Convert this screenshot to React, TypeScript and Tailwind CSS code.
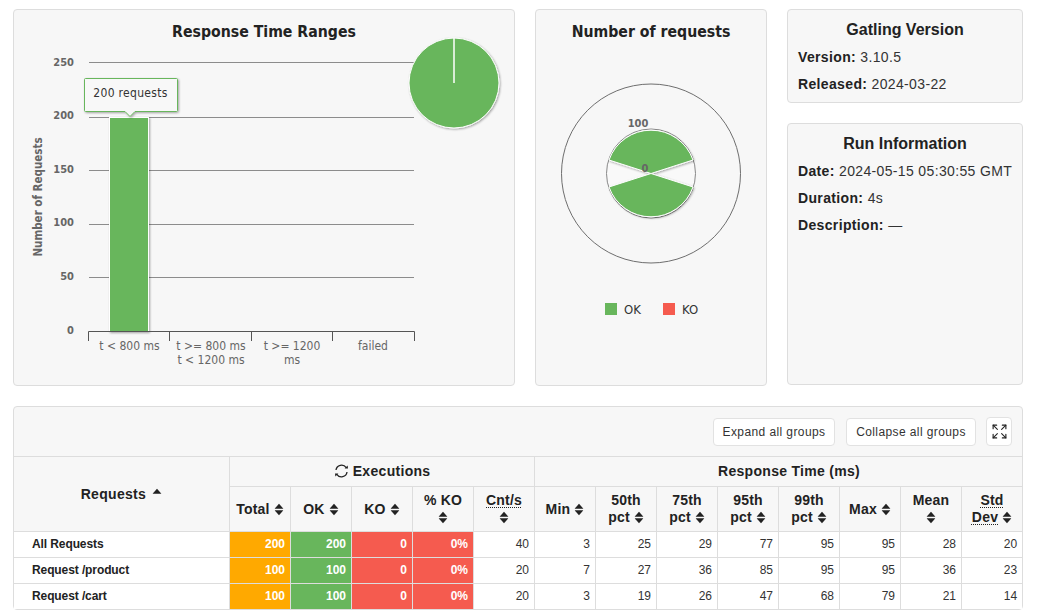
import { Expand } from 'lucide-react';

const GREEN = '#68b65c';
const RED = '#f55b4f';
const ORANGE = '#ffa900';

const chartFont = { fontFamily: '"DejaVu Sans Condensed", "DejaVu Sans", sans-serif', fontStretch: 'condensed' };

function SortIcon({ up = true, down = true }: { up?: boolean; down?: boolean }) {
  return (
    <svg width="10" height="13" viewBox="0 0 9 12" className="inline-block align-[-2px]" fill="#222">
      {up && <path d="M4.5 0.8 L8.4 5 Q8.5 5.4 8 5.4 L1 5.4 Q0.5 5.4 0.6 5 Z" />}
      {down && <path d="M1 6.6 L8 6.6 Q8.5 6.6 8.4 7 L4.5 11.2 L0.6 7 Q0.5 6.6 1 6.6 Z" />}
    </svg>
  );
}

function LoopIcon() {
  return (
    <svg width="15" height="14" viewBox="0 0 15 14" className="inline-block align-[-2px]" fill="none" stroke="#222" strokeWidth="1.3">
      <path d="M2 6 A5.6 5.6 0 0 1 12.2 3.6" />
      <path d="M13 8 A5.6 5.6 0 0 1 2.8 10.4" />
      <path d="M10.6 4.4 L14 4.6 L13.6 1.4 Z" fill="#222" stroke="none" />
      <path d="M4.4 9.6 L1 9.4 L1.4 12.6 Z" fill="#222" stroke="none" />
    </svg>
  );
}

function ResponseTimeChart() {
  const grid = [
    { y: 62, label: '250', base: 66 },
    { y: 117, label: '200', base: 119 },
    { y: 170, label: '150', base: 173 },
    { y: 224, label: '100', base: 226 },
    { y: 277, label: '50', base: 280 },
  ];
  return (
    <svg width="500" height="375" className="block" style={chartFont}>
      <defs>
        <filter id="soft" x="-20%" y="-20%" width="140%" height="140%">
          <feDropShadow dx="1" dy="1" stdDeviation="1" floodColor="#000" floodOpacity="0.35" />
        </filter>
      </defs>
      <g transform="translate(-14 -10)">
        <text x="264" y="36.5" textAnchor="middle" fontSize="15.7" fontWeight="700" fill="#222">Response Time Ranges</text>
        <text transform="translate(42 197) rotate(-90)" textAnchor="middle" fontSize="11.5" fontWeight="700" fill="#666">Number of Requests</text>
        {grid.map(g => (
          <g key={g.label}>
            <line x1="89" x2="414" y1={g.y + 0.5} y2={g.y + 0.5} stroke="#8c8c8c" />
            <text x="74" y={g.base} textAnchor="end" fontSize="11" fontWeight="700" fill="#666">{g.label}</text>
          </g>
        ))}
        <text x="74" y="334" textAnchor="end" fontSize="11" fontWeight="700" fill="#666">0</text>
        <rect x="109.5" y="117.5" width="39" height="214" fill={GREEN} stroke="#fff" filter="url(#soft)" />
        <path d="M88.5 341 V331.5 H414.5 V341 M169.5 331.5 V341 M251.5 331.5 V341 M332.5 331.5 V341" fill="none" stroke="#555" />
        <g fontSize="12" fill="#666" textAnchor="middle">
          <text x="129.5" y="350">t &lt; 800 ms</text>
          <text x="211" y="350">t &gt;= 800 ms</text>
          <text x="211" y="364">t &lt; 1200 ms</text>
          <text x="292" y="350">t &gt;= 1200</text>
          <text x="292" y="364">ms</text>
          <text x="373" y="350">failed</text>
        </g>
        <path d="M85.5 78.5 H176.5 Q177.5 78.5 177.5 79.5 V110.5 Q177.5 111.5 176.5 111.5 H135 L130 116.5 L125 111.5 H85.5 Q84.5 111.5 84.5 110.5 V79.5 Q84.5 78.5 85.5 78.5 Z" fill="#f8f8f8" stroke={GREEN} filter="url(#soft)" />
        <text x="130.5" y="97" textAnchor="middle" fontSize="12" fill="#333" letterSpacing="0.3">200 requests</text>
        <circle cx="454" cy="83" r="45" fill={GREEN} stroke="#fff" filter="url(#soft)" />
        <line x1="454" x2="454" y1="38" y2="83" stroke="#fff" strokeWidth="1.5" />
      </g>
    </svg>
  );
}

function RequestsChart() {
  return (
    <svg width="230" height="375" className="block" style={chartFont}>
      <g transform="translate(-536 -10)">
        <text x="651" y="36.5" textAnchor="middle" fontSize="15.7" fontWeight="700" fill="#222">Number of requests</text>
        <circle cx="651" cy="173.5" r="89.5" fill="none" stroke="#6e6e6e" />
        <circle cx="651" cy="173.5" r="44.5" fill="#f9f9f9" stroke="#888" />
        <path d="M651 173.5 L693 160 A44.5 44.5 0 0 0 609 160 Z" fill={GREEN} stroke="#fff" filter="url(#soft)" />
        <path d="M651 173.5 L693 187 A44.5 44.5 0 0 1 609 187 Z" fill={GREEN} stroke="#fff" filter="url(#soft)" />
        <text x="638" y="127" textAnchor="middle" fontSize="11" fontWeight="700" fill="#666">100</text>
        <text x="645" y="172" textAnchor="middle" fontSize="11" fontWeight="700" fill="#666">0</text>
        <rect x="605" y="303" width="12" height="12" fill={GREEN} />
        <text x="624" y="314" fontSize="13" fill="#333">OK</text>
        <rect x="663" y="303" width="12" height="12" fill={RED} />
        <text x="682" y="314" fontSize="13" fill="#333">KO</text>
      </g>
    </svg>
  );
}

function InfoLine({ label, value }: { label: string; value: string }) {
  return (
    <p className="text-[14px] leading-[27px] tracking-[0.35px] whitespace-nowrap text-[#333]">
      <span className="font-bold text-[#222]">{label}</span> {value}
    </p>
  );
}

const metricHeads: { top: string; bottom?: string; inline?: boolean; dotted?: boolean }[] = [
  { top: 'Total', inline: true },
  { top: 'OK', inline: true },
  { top: 'KO', inline: true },
  { top: '% KO' },
  { top: 'Cnt/s', dotted: true },
  { top: 'Min', inline: true },
  { top: '50th', bottom: 'pct' },
  { top: '75th', bottom: 'pct' },
  { top: '95th', bottom: 'pct' },
  { top: '99th', bottom: 'pct' },
  { top: 'Max', inline: true },
  { top: 'Mean' },
  { top: 'Std', bottom: 'Dev', dotted: true },
];

const rows = [
  { name: 'All Requests', total: 200, ok: 200, cnt: 40, times: [3, 25, 29, 77, 95, 95, 28, 20] },
  { name: 'Request /product', total: 100, ok: 100, cnt: 20, times: [7, 27, 36, 85, 95, 95, 36, 23] },
  { name: 'Request /cart', total: 100, ok: 100, cnt: 20, times: [3, 19, 26, 47, 68, 79, 21, 14] },
];

const dotted = 'underline decoration-dotted decoration-1 underline-offset-2';

function MetricHead({ head, last }: { head: (typeof metricHeads)[number]; last: boolean }) {
  const cls = head.dotted ? dotted : '';
  return (
    <th className={`border-b border-[#ddd] text-center align-middle font-bold text-[14px] leading-[17px] tracking-[0.2px] text-[#222] ${last ? '' : 'border-r'}`}>
      {head.inline ? (
        <span>{head.top} <SortIcon /></span>
      ) : head.bottom ? (
        <>
          <div className={cls}>{head.top}</div>
          <div><span className={cls}>{head.bottom}</span> <SortIcon /></div>
        </>
      ) : (
        <>
          <div className={cls}>{head.top}</div>
          <div><SortIcon /></div>
        </>
      )}
    </th>
  );
}

function ColorCell({ value, color, isLast }: { value: string | number; color: string; isLast: boolean }) {
  return (
    <td className={`border-r border-[#ddd] px-[5px] pb-px text-right font-bold text-white ${isLast ? '' : 'border-b'}`} style={{ backgroundColor: color }}>
      {value}
    </td>
  );
}

export default function App() {
  return (
    <div className="w-[1043px] h-[615px] overflow-hidden bg-white pt-[9px] pl-[13px]" style={{ fontFamily: '"Liberation Sans", Arial, sans-serif' }}>
      <div className="flex h-[377px] gap-5">
        <div className="w-[502px] rounded-sm border border-[#ddd] bg-[#f7f7f7]">
          <ResponseTimeChart />
        </div>
        <div className="w-[232px] rounded-sm border border-[#ddd] bg-[#f7f7f7]">
          <RequestsChart />
        </div>
        <div className="flex w-[236px] flex-col gap-5">
          <div className="h-[94px] rounded-sm border border-[#ddd] bg-[#f7f7f7] px-[10px] pt-[10px]">
            <h2 className="mb-[4px] text-center text-[16px] leading-[20px] font-bold text-[#222]">Gatling Version</h2>
            <InfoLine label="Version:" value="3.10.5" />
            <InfoLine label="Released:" value="2024-03-22" />
          </div>
          <div className="mb-px flex-1 rounded-sm border border-[#ddd] bg-[#f7f7f7] px-[10px] pt-[10px]">
            <h2 className="mb-[4px] text-center text-[16px] leading-[20px] font-bold text-[#222]">Run Information</h2>
            <InfoLine label="Date:" value="2024-05-15 05:30:55 GMT" />
            <InfoLine label="Duration:" value="4s" />
            <InfoLine label="Description:" value="—" />
          </div>
        </div>
      </div>

      <div className="mt-5 w-[1010px] rounded-sm border border-[#ddd] bg-[#f7f7f7]">
        <div className="flex h-[50px] items-center justify-end border-b border-[#ddd] pr-[10px] text-[12px] text-[#333]">
          <button className="mr-[11px] h-[28px] w-[122px] rounded-sm border border-[#e2e2e2] bg-white tracking-[0.4px]">Expand all groups</button>
          <button className="mr-[10px] h-[28px] w-[130px] rounded-sm border border-[#e2e2e2] bg-white tracking-[0.4px]">Collapse all groups</button>
          <button className="flex h-[29px] w-[26px] items-center justify-center rounded-sm border border-[#e2e2e2] bg-white">
            <Expand size={17} strokeWidth={1.6} color="#222" />
          </button>
        </div>
        <table className="w-[1008px] table-fixed border-separate border-spacing-0 text-[12px] text-[#333]">
          <colgroup>
            <col className="w-[216px]" />
            {metricHeads.map((h, i) => (
              <col key={h.top + i} className={i === 12 ? 'w-[60px]' : 'w-[61px]'} />
            ))}
          </colgroup>
          <thead>
            <tr className="h-[30px]">
              <th rowSpan={2} className="border-r border-b border-[#ddd] text-center text-[14px] font-bold tracking-[0.3px] text-[#222]">
                Requests <span className="ml-[2px]"><SortIcon down={false} /></span>
              </th>
              <th colSpan={5} className="border-r border-b border-[#ddd] text-center text-[14px] font-bold tracking-[0.3px] text-[#222]">
                <LoopIcon /> Executions
              </th>
              <th colSpan={8} className="border-b border-[#ddd] pl-[21px] text-center text-[14px] font-bold tracking-[0.3px] text-[#222]">
                Response Time (ms)
              </th>
            </tr>
            <tr className="h-[45px]">
              {metricHeads.map((h, i) => (
                <MetricHead key={h.top + i} head={h} last={i === 12} />
              ))}
            </tr>
          </thead>
          <tbody className="bg-white">
            {rows.map((r, rowIdx) => {
              const isLast = rowIdx === 2;
              const rowBorder = isLast ? '' : 'border-b';
              return (
                <tr key={r.name} className={isLast ? 'h-[25px]' : 'h-[26px]'}>
                  <td className={`border-r border-[#ddd] pb-px pl-[18px] font-bold tracking-[-0.1px] text-[#222] ${rowBorder}`}>{r.name}</td>
                  <ColorCell value={r.total} color={ORANGE} isLast={isLast} />
                  <ColorCell value={r.ok} color={GREEN} isLast={isLast} />
                  <ColorCell value={0} color={RED} isLast={isLast} />
                  <ColorCell value="0%" color={RED} isLast={isLast} />
                  <td className={`border-r border-[#ddd] px-[5px] pb-px text-right ${rowBorder}`}>{r.cnt}</td>
                  {r.times.map((t, i) => (
                    <td key={i} className={`border-[#ddd] px-[5px] pb-px text-right ${rowBorder} ${i === 7 ? '' : 'border-r'}`}>{t}</td>
                  ))}
                </tr>
              );
            })}
          </tbody>
        </table>
      </div>
    </div>
  );
}
